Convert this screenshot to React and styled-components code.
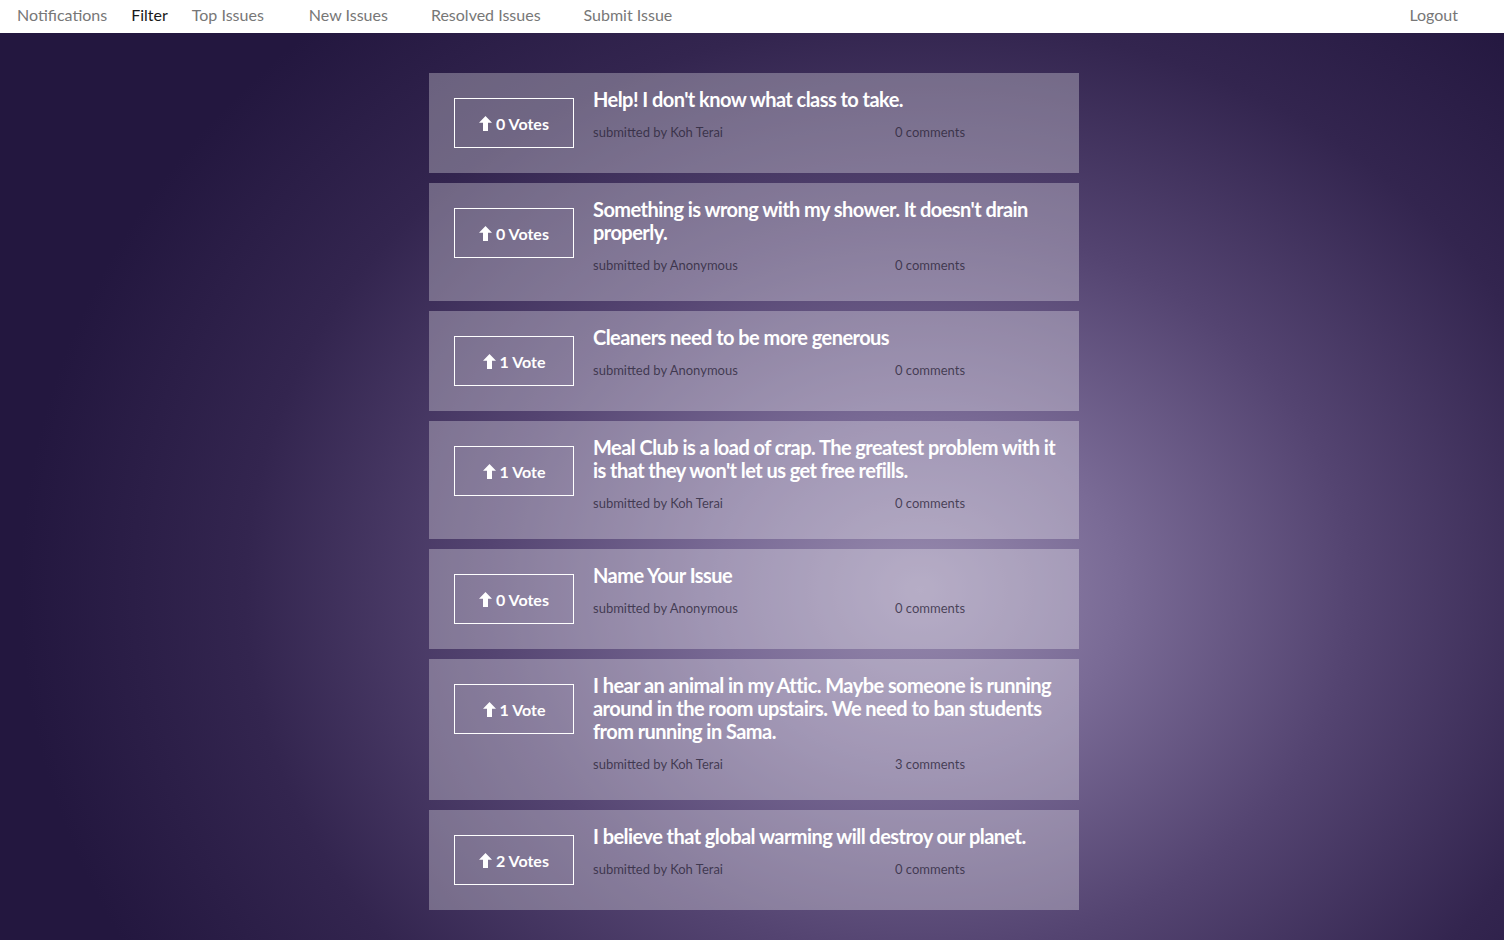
import React from "react";
import styled, { createGlobalStyle } from "styled-components";

const Global = createGlobalStyle`
  html, body { margin: 0; padding: 0; }
  body {
    font-family: Lato, "Open Sans", sans-serif;
    background: #22163d;
  }
`;

const Page = styled.div`
  min-height: 940px;
  background: radial-gradient(ellipse 900px 760px at 920px 590px, #978aae 0%, #7a6b96 22%, #544471 48%, #33254f 75%, #23173f 100%);
  display: flex;
  flex-direction: column;
`;

const Nav = styled.nav`
  height: 33px;
  background: #fff;
  display: flex;
  align-items: center;
  justify-content: space-between;
  padding: 0 46px 0 17px;
`;

const NavGroup = styled.div`
  display: flex;
  align-items: center;
`;

const NavLink = styled.a`
  font-size: 16px;
  color: ${(p) => (p.$active ? "#1a1a1a" : "#777")};
  margin-right: ${(p) => p.$gap}px;
  text-decoration: none;
  cursor: pointer;
  line-height: 30px;
  padding-bottom: 3px;
  &:last-child { margin-right: 0; }
`;

const List = styled.main`
  width: 650px;
  margin: 40px 0 30px calc(50% - 323px);
  display: flex;
  flex-direction: column;
  gap: 10px;
`;

const Card = styled.article`
  background: rgba(255, 255, 255, 0.3);
  display: flex;
  align-items: flex-start;
  padding: 15px 20px 25px 25px;
  box-sizing: border-box;
`;

const VoteButton = styled.button`
  width: 120px;
  height: 50px;
  margin-top: 10px;
  flex: none;
  border: 1px solid #fff;
  background: transparent;
  color: #fff;
  font-family: Lato, sans-serif;
  font-weight: 700;
  font-size: 16px;
  display: flex;
  align-items: center;
  justify-content: center;
  gap: 4px;
  padding: 0;
  box-sizing: border-box;
  cursor: pointer;
`;

const Body = styled.div`
  margin-left: 19px;
  margin-bottom: 2px;
  flex: 1;
  display: flex;
  flex-direction: column;
  gap: 12px;
`;

const Title = styled.h2`
  margin: 0;
  font-size: 20px;
  line-height: 23px;
  font-weight: 700;
  color: #fff;
  letter-spacing: -0.55px;
`;

const Meta = styled.div`
  display: grid;
  grid-template-columns: 302px 1fr;
  font-size: 13px;
  line-height: 18px;
  color: rgba(38, 32, 52, 0.75);
`;

const Arrow = () => (
  <svg width="13" height="15" viewBox="0 0 13 15" aria-hidden="true">
    <path d="M6.5 0 L13 6.8 L9 6.8 L9 15 L4 15 L4 6.8 L0 6.8 Z" fill="#fff" />
  </svg>
);

const issues = [
  { votes: 0, title: "Help! I don't know what class to take.", by: "Koh Terai", comments: 0 },
  { votes: 0, title: "Something is wrong with my shower. It doesn't drain properly.", by: "Anonymous", comments: 0 },
  { votes: 1, title: "Cleaners need to be more generous", by: "Anonymous", comments: 0 },
  { votes: 1, title: "Meal Club is a load of crap. The greatest problem with it is that they won't let us get free refills.", by: "Koh Terai", comments: 0 },
  { votes: 0, title: "Name Your Issue", by: "Anonymous", comments: 0 },
  { votes: 1, title: "I hear an animal in my Attic. Maybe someone is running around in the room upstairs. We need to ban students from running in Sama.", by: "Koh Terai", comments: 3 },
  { votes: 2, title: "I believe that global warming will destroy our planet.", by: "Koh Terai", comments: 0 },
];

const navItems = [
  { label: "Notifications", gap: 24 },
  { label: "Filter", gap: 24, active: true },
  { label: "Top Issues", gap: 45 },
  { label: "New Issues", gap: 43 },
  { label: "Resolved Issues", gap: 43 },
  { label: "Submit Issue", gap: 0 },
];

export default function App() {
  return (
    <>
      <Global />
      <Page>
        <Nav>
          <NavGroup>
            {navItems.map((n) => (
              <NavLink key={n.label} $gap={n.gap} $active={n.active}>
                {n.label}
              </NavLink>
            ))}
          </NavGroup>
          <NavGroup>
            <NavLink $gap={0}>Logout</NavLink>
          </NavGroup>
        </Nav>
        <List>
          {issues.map((it, i) => (
            <Card key={i}>
              <VoteButton>
                <Arrow />
                {it.votes} {it.votes === 1 ? "Vote" : "Votes"}
              </VoteButton>
              <Body>
                <Title>{it.title}</Title>
                <Meta>
                  <span>submitted by {it.by}</span>
                  <span>{it.comments} comments</span>
                </Meta>
              </Body>
            </Card>
          ))}
        </List>
      </Page>
    </>
  );
}
